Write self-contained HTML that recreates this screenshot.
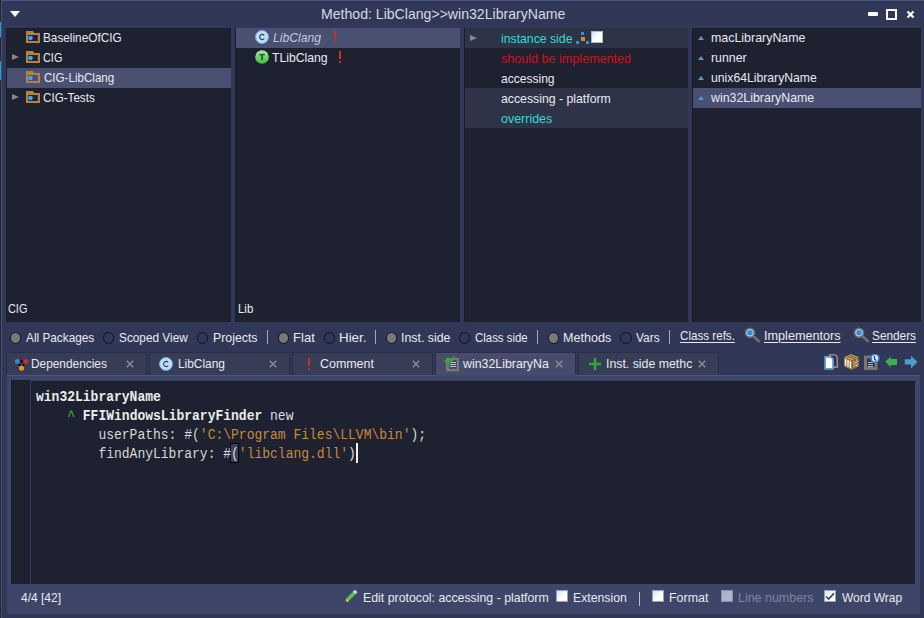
<!DOCTYPE html>
<html><head><meta charset="utf-8">
<style>
*{margin:0;padding:0;box-sizing:border-box}
html,body{width:924px;height:618px;overflow:hidden;background:#313757}
body{position:relative;font-family:"Liberation Sans",sans-serif;font-size:13px;color:#e8eaf0}
.a{position:absolute}
.t{position:absolute;white-space:nowrap;line-height:14px;height:14px;transform-origin:0 0}
.panel{position:absolute;top:28px;height:294px;background:#1e2230;border-left:1px solid #1a1d29;border-top:1px solid #1a1d29}
.sel{position:absolute;background:#4a5072}
.hl{position:absolute;background:#2f3348}
.fold{position:absolute;width:14px;height:13px}
.exp{position:absolute;width:0;height:0;border-top:3.8px solid transparent;border-bottom:3.8px solid transparent;border-left:7.6px solid #888888}
.up{position:absolute;width:0;height:0;border-left:3.7px solid transparent;border-right:3.7px solid transparent;border-bottom:4.4px solid #4b9dcc}
.radio{position:absolute;width:11.4px;height:11.4px;border-radius:50%;border:1.5px solid #101218;background:transparent}
.radio.on{background:#787878}
.sep{position:absolute;width:1px;height:14px;background:#98b0bc}
.tab{position:absolute;top:352px;height:23px;width:141px;background:#383d57;border:1px solid #2b2f45;border-bottom:none}
.tab.on{background:#474c6d;border-color:#2b2f45}
.x{position:absolute;color:#8d91a3;font-size:15px;line-height:14px}
.code{position:absolute;font-family:"Liberation Mono",monospace;font-size:14px;white-space:pre;line-height:19px;transform:scaleX(0.92857);transform-origin:0 0}
.cb{position:absolute;width:12px;height:12px;background:linear-gradient(135deg,#cfe6f5,#ffffff 60%);border:1px solid #9aa0b0}
</style></head><body>
<!-- desktop strip -->
<div class="a" style="left:0;top:0;width:1px;height:618px;background:#222a2b"></div>
<div class="a" style="left:0;top:22px;width:1px;height:15px;background:#2a9ad8"></div>
<div class="a" style="left:0;top:61px;width:1px;height:19px;background:#2a9ad8"></div>
<div class="a" style="left:1px;top:0;width:923px;height:1px;background:#4a5482"></div>
<div class="a" style="left:1px;top:0;width:1px;height:618px;background:#454f78"></div>

<!-- title bar -->
<svg class="a" style="left:9px;top:10px" width="12" height="8"><path d="M1 1 L11 1 L6 7 Z" fill="#fff"/></svg>
<div class="t" style="left:321.45px;top:6px;font-size:15px;line-height:16px;height:16px;color:#d6d9e4;transform:scaleX(0.9391)">Method: LibClang&gt;&gt;win32LibraryName</div>
<div class="a" style="left:868px;top:12px;width:10px;height:4px;background:#fff;border-radius:1px"></div>
<div class="a" style="left:886px;top:9px;width:11px;height:11px;border:2px solid #fff"></div>
<svg class="a" style="left:906px;top:10px" width="9" height="9"><path d="M1.5 1.5 L7.5 7.5 M7.5 1.5 L1.5 7.5" stroke="#fff" stroke-width="2.2"/></svg>

<!-- panel 1 -->
<div class="panel" style="left:6px;width:225px"></div>
<div class="sel" style="left:7px;top:68px;width:224px;height:20px"></div>
<div id="p1"></div>
<!-- panel 2 -->
<div class="panel" style="left:235px;width:225px"></div>
<div class="sel" style="left:236px;top:28px;width:224px;height:20px"></div>
<!-- panel 3 -->
<div class="panel" style="left:464px;width:224px"></div>
<div class="hl" style="left:465px;top:28px;width:223px;height:20px"></div>
<div class="hl" style="left:465px;top:88px;width:223px;height:40px"></div>
<!-- panel 4 -->
<div class="panel" style="left:692px;width:229px"></div>
<div class="sel" style="left:693px;top:88px;width:228px;height:20px"></div>

<!-- panel 1 content -->
<svg class="a" style="left:26px;top:31px" width="14" height="13"><path d="M0 0 H7 L8.2 2 H14 V12 H0 Z" fill="#b5823e"/><rect x="2" y="4" width="9.8" height="6" fill="#1e2230"/><circle cx="4.5" cy="7" r="2.3" fill="#3fa8f4"/></svg>
<svg class="a" style="left:26px;top:51px" width="14" height="13"><path d="M0 0 H7 L8.2 2 H14 V12 H0 Z" fill="#b5823e"/><rect x="2" y="4" width="9.8" height="6" fill="#1e2230"/><circle cx="4.5" cy="7" r="2.3" fill="#3fa8f4"/></svg>
<svg class="a" style="left:26px;top:71px" width="14" height="13"><path d="M0 0 H7 L8.2 2 H14 V12 H0 Z" fill="#b5823e"/><rect x="2" y="4" width="9.8" height="6" fill="#4a5072"/><circle cx="4.5" cy="7" r="2.3" fill="#3fa8f4"/></svg>
<svg class="a" style="left:26px;top:91px" width="14" height="13"><path d="M0 0 H7 L8.2 2 H14 V12 H0 Z" fill="#b5823e"/><rect x="2" y="4" width="9.8" height="6" fill="#1e2230"/><circle cx="4.5" cy="7" r="2.3" fill="#3fa8f4"/></svg>
<div class="exp" style="left:11.8px;top:53.8px"></div>
<div class="exp" style="left:11.8px;top:93.8px"></div>
<div class="t" style="left:42.77px;top:31px;transform:scaleX(0.9069)">BaselineOfCIG</div>
<div class="t" style="left:42.63px;top:51px;transform:scaleX(0.8379)">CIG</div>
<div class="t" style="left:43.52px;top:71px;transform:scaleX(0.8917)">CIG-LibClang</div>
<div class="t" style="left:42.50px;top:91px;transform:scaleX(0.8955)">CIG-Tests</div>
<div class="t" style="left:7.63px;top:302px;transform:scaleX(0.8379)">CIG</div>

<!-- panel 2 content -->
<svg class="a" style="left:255px;top:30px" width="14" height="14"><circle cx="7" cy="7" r="6.5" fill="#bde0f8" stroke="#62aee6" stroke-width="1"/><path d="M9.2 5.3 A2.6 2.6 0 1 0 9.2 8.7" fill="none" stroke="#3c3c3c" stroke-width="1.15"/></svg>
<svg class="a" style="left:255px;top:50px" width="14" height="14"><defs><linearGradient id="gT" x1="0" y1="0" x2="0" y2="1"><stop offset="0" stop-color="#aaeaa6"/><stop offset="1" stop-color="#3cc038"/></linearGradient></defs><circle cx="7" cy="7" r="6.8" fill="url(#gT)"/><path d="M4.2 4.6 H9.8" stroke="#3a583a" stroke-width="1.5"/><path d="M7 4.6 V9.9" stroke="#3a583a" stroke-width="1.9"/></svg>
<div class="t" style="left:273.17px;top:31px;font-style:italic;color:#c3c8dc;transform:scaleX(0.9371)">LibClang</div>
<div class="t" style="left:272.19px;top:51px;transform:scaleX(0.9389)">TLibClang</div>
<div class="t" style="left:238.00px;top:302px;transform:scaleX(0.8775)">Lib</div>

<!-- panel 3 content -->
<div class="exp" style="left:469.8px;top:34.6px"></div>
<div class="t" style="left:501.28px;top:32px;color:#36dad2;transform:scaleX(0.9416)">instance side</div>
<div class="a" style="left:581px;top:32px;width:3px;height:3px;background:#3a8fd0"></div>
<div class="a" style="left:581px;top:37px;width:4px;height:4px;background:#d08f3a"></div>
<div class="a" style="left:576px;top:41px;width:3px;height:3px;background:#3a8fd0"></div>
<div class="a" style="left:586px;top:41px;width:3px;height:3px;background:#3a8fd0"></div>
<div class="a" style="left:591px;top:31px;width:12px;height:12px;background:linear-gradient(135deg,#cde8f8,#fff 55%);border:1px solid #b0b8c8"></div>
<div class="t" style="left:500.79px;top:52px;color:#d0101e;transform:scaleX(0.9680)">should be implemented</div>
<div class="t" style="left:500.63px;top:72px;transform:scaleX(0.9264)">accessing</div>
<div class="t" style="left:500.9px;top:92px;transform:scaleX(0.9441)">accessing - platform</div>
<div class="t" style="left:500.97px;top:112px;color:#36dad2;transform:scaleX(0.9584)">overrides</div>

<!-- panel 4 content -->
<div class="up" style="left:697.8px;top:35.5px"></div>
<div class="up" style="left:697.8px;top:55.5px"></div>
<div class="up" style="left:697.8px;top:75.5px"></div>
<div class="up" style="left:697.8px;top:95.5px"></div>
<div class="t" style="left:711.48px;top:31px;transform:scaleX(0.9547)">macLibraryName</div>
<div class="t" style="left:711.39px;top:51px;transform:scaleX(0.9480)">runner</div>
<div class="t" style="left:710.96px;top:71px;transform:scaleX(0.9383)">unix64LibraryName</div>
<div class="t" style="left:710.77px;top:91px;transform:scaleX(0.9524)">win32LibraryName</div>

<!-- toolbar -->
<div class="radio on" style="left:10.1px;top:332.2px"></div>
<div class="t" style="left:25.75px;top:331px;transform:scaleX(0.9083)">All Packages</div>
<div class="radio" style="left:102.8px;top:332.2px"></div>
<div class="t" style="left:118.69px;top:331px;transform:scaleX(0.9089)">Scoped View</div>
<div class="radio" style="left:196.7px;top:332.2px"></div>
<div class="t" style="left:213.27px;top:331px;transform:scaleX(0.9467)">Projects</div>
<div class="sep" style="left:267px;top:330px"></div>
<div class="radio on" style="left:277.7px;top:332.2px"></div>
<div class="t" style="left:292.61px;top:331px;transform:scaleX(1.0043)">Flat</div>
<div class="radio" style="left:324.1px;top:332.2px"></div>
<div class="t" style="left:339.04px;top:331px;transform:scaleX(1.0279)">Hier.</div>
<div class="sep" style="left:375px;top:330px"></div>
<div class="radio on" style="left:385.8px;top:332.2px"></div>
<div class="t" style="left:401.33px;top:331px;transform:scaleX(0.9503)">Inst. side</div>
<div class="radio" style="left:458.8px;top:332.2px"></div>
<div class="t" style="left:475.20px;top:331px;transform:scaleX(0.8790)">Class side</div>
<div class="sep" style="left:537px;top:330px"></div>
<div class="radio on" style="left:548.1px;top:332.2px"></div>
<div class="t" style="left:563.18px;top:331px;transform:scaleX(0.9674)">Methods</div>
<div class="radio" style="left:620.3px;top:332.2px"></div>
<div class="t" style="left:636.09px;top:331px;transform:scaleX(0.9171)">Vars</div>
<div class="sep" style="left:669px;top:330px"></div>
<div class="t" style="left:680.00px;top:329px;text-decoration:underline;text-underline-offset:2px;transform:scaleX(0.8941)">Class refs.</div>
<div class="t" style="left:764.49px;top:329px;text-decoration:underline;text-underline-offset:2px;transform:scaleX(0.9727)">Implementors</div>
<div class="t" style="left:872.46px;top:329px;text-decoration:underline;text-underline-offset:2px;transform:scaleX(0.9087)">Senders</div>

<!-- tabs -->
<div class="tab" style="left:6px"></div>
<div class="tab" style="left:149px"></div>
<div class="tab" style="left:292px"></div>
<div class="tab on" style="left:435px"></div>
<div class="tab" style="left:578px"></div>
<div class="t" style="left:31.43px;top:357px;transform:scaleX(0.9123)">Dependencies</div>
<div class="t" style="left:177.55px;top:357px;transform:scaleX(0.9147)">LibClang</div>
<div class="t" style="left:319.84px;top:357px;transform:scaleX(0.9567)">Comment</div>
<div class="t" style="left:463.27px;top:357px;transform:scaleX(0.9503)">win32LibraryNa</div>
<div class="t" style="left:606.14px;top:357px;transform:scaleX(0.9478)">Inst. side methc</div>

<!-- editor -->
<div class="a" style="left:7px;top:375px;width:913px;height:239px;background:#3d4569;border-top:1px solid #4a5488"></div>
<div class="a" style="left:436px;top:375px;width:139px;height:1px;background:#424a6c"></div>
<div class="a" style="left:11px;top:380px;width:19px;height:204px;background:#1e2230;border-left:1px solid #1a1d28;border-top:1px solid #1a1d28;border-right:1px solid #1a1d28"></div>
<div class="a" style="left:31px;top:381px;width:884px;height:203px;background:#1e2230;border-left:1px solid #1a1d28;border-top:1px solid #1a1d28"></div>
<div class="a" style="left:230px;top:443px;width:9px;height:20px;border:1px solid #000;background:#3c4262"></div>
<div class="code" style="left:36px;top:388px"><b style="color:#ececec">win32LibraryName</b>
    <span style="color:#34c44a">^</span> <b style="color:#ececec">FFIWindowsLibraryFinder</b> <span style="color:#dcdee8">new</span>
<span style="color:#d8d8d8">        userPaths: #(<span style="color:#c8893a">'C:\Program Files\LLVM\bin'</span>);
        findAnyLibrary: #(<span style="color:#c8893a">'libclang.dll'</span>)</span></div>

<!-- status bar -->
<div class="t" style="left:21.14px;top:591px;transform:scaleX(0.9235)">4/4 [42]</div>
<div class="t" style="left:363.02px;top:591px;transform:scaleX(0.9485)">Edit protocol: accessing - platform</div>
<div class="t" style="left:573.14px;top:591px;transform:scaleX(0.9417)">Extension</div>
<div class="t" style="left:669.10px;top:591px;transform:scaleX(0.9571)">Format</div>
<div class="t" style="left:738.12px;top:591px;color:#7d84a0;transform:scaleX(0.9581)">Line numbers</div>
<div class="t" style="left:842.22px;top:591px;transform:scaleX(0.9217)">Word Wrap</div>

<!-- tab icons -->
<svg class="a" style="left:13px;top:357px" width="16" height="15"><path d="M4.4 4.4 L12.5 4.4 L8.5 11.1 Z" fill="none" stroke="#000" stroke-width="1.6"/><circle cx="4.4" cy="4.4" r="2.5" fill="#3b87c8"/><circle cx="12.5" cy="4.4" r="2.5" fill="#c8302a"/><circle cx="8.5" cy="11.1" r="2.6" fill="#e8961e"/></svg>
<svg class="a" style="left:159px;top:357px" width="14" height="14"><circle cx="7" cy="7" r="6.5" fill="#bde0f8" stroke="#62aee6" stroke-width="1"/><path d="M9.2 5.3 A2.6 2.6 0 1 0 9.2 8.7" fill="none" stroke="#3c3c3c" stroke-width="1.15"/></svg>
<div class="a" style="left:308px;top:358px;width:2px;height:8px;background:#c83020"></div>
<div class="a" style="left:308px;top:368px;width:2px;height:2px;background:#c83020"></div>
<div class="a" style="left:334px;top:31px;width:2px;height:8px;background:#c83020"></div>
<div class="a" style="left:334px;top:41px;width:2px;height:2px;background:#c83020"></div>
<div class="a" style="left:339px;top:51px;width:2px;height:8px;background:#c83020"></div>
<div class="a" style="left:339px;top:61px;width:2px;height:2px;background:#c83020"></div>
<svg class="a" style="left:444px;top:356px" width="16" height="16"><rect x="2" y="2" width="13" height="13.3" fill="#7c7a6e"/><rect x="5" y="4" width="7.7" height="8.8" fill="#40466a"/><path d="M6 6.5 H12 M6 8.5 H12 M6 10.5 H12" stroke="#c0c2d0" stroke-width="1"/><path d="M1 4.2 L4.4 7.2 L10.5 1.3" fill="none" stroke="#2ea836" stroke-width="2.8"/></svg>
<svg class="a" style="left:588px;top:357px" width="14" height="14"><path d="M7 1 V13 M1 7 H13" stroke="#30a636" stroke-width="2.4"/></svg>
<svg class="a" style="left:126px;top:360px" width="8" height="8"><path d="M0.8 0.8 L7.2 7.2 M7.2 0.8 L0.8 7.2" stroke="#8a8b8c" stroke-width="1.5"/></svg>
<svg class="a" style="left:269px;top:360px" width="8" height="8"><path d="M0.8 0.8 L7.2 7.2 M7.2 0.8 L0.8 7.2" stroke="#8a8b8c" stroke-width="1.5"/></svg>
<svg class="a" style="left:412px;top:360px" width="8" height="8"><path d="M0.8 0.8 L7.2 7.2 M7.2 0.8 L0.8 7.2" stroke="#8a8b8c" stroke-width="1.5"/></svg>
<svg class="a" style="left:555px;top:360px" width="8" height="8"><path d="M0.8 0.8 L7.2 7.2 M7.2 0.8 L0.8 7.2" stroke="#8a8b8c" stroke-width="1.5"/></svg>
<svg class="a" style="left:698px;top:360px" width="8" height="8"><path d="M0.8 0.8 L7.2 7.2 M7.2 0.8 L0.8 7.2" stroke="#8a8b8c" stroke-width="1.5"/></svg>
<!-- toolbar right icons -->
<svg class="a" style="left:824px;top:353px" width="16" height="18"><path d="M5.6 1.7 H11 L13.3 4 V14.1 H5.6 Z" fill="#2e3352" stroke="#8c8a86" stroke-width="1.6"/><path d="M1.1 3.8 H6.6 L9 6.2 V15.8 H1.1 Z" fill="#fff" stroke="#6a9ec0" stroke-width="1.7"/></svg>
<svg class="a" style="left:843px;top:353px" width="17" height="18"><path d="M1 4.2 L8 1 L16 4.2 L9 7.5 Z" fill="#c49a62"/><path d="M1 4.2 L9 7.5 V17 L1 13.5 Z" fill="#a87c44"/><path d="M9 7.5 L16 4.2 V13.6 L9 17 Z" fill="#8a6434"/><path d="M4 2.8 L11.5 6 M6.5 1.9 L13.5 5.2" stroke="#7a5a30" stroke-width="0.9"/><path d="M2.6 6 V12.6 M5 7 V13.8 M7.4 8 V14.9" stroke="#fff" stroke-width="1.3"/><path d="M10.5 8.2 h1 M13 7 h1 M11.7 9.6 h1 M14.2 8.4 h1 M10.5 11 h1 M13 9.8 h1 M11.7 12.4 h1 M14.2 11.2 h1 M10.5 13.8 h1 M13 12.6 h1" stroke="#f4ecdc" stroke-width="1.1"/></svg>
<svg class="a" style="left:863px;top:354px" width="18" height="17"><rect x="2.5" y="3" width="10.5" height="11.5" fill="#2e3352" stroke="#7a7770" stroke-width="3"/><path d="M5 8.5 H10 M5 10.5 H10 M5 12.5 H10" stroke="#b8bac8" stroke-width="0.9"/><circle cx="12" cy="4.3" r="4" fill="#cfe8f8" stroke="#2f7fd0" stroke-width="1.6"/><path d="M11.5 2 V5 L13 6.5" stroke="#333" stroke-width="1.1" fill="none"/></svg>
<svg class="a" style="left:885px;top:356px" width="13" height="12"><path d="M0.3 5.5 L5.8 0.5 V3.1 H12 V9 H5.8 V11.5 Z" fill="#3cb050"/></svg>
<svg class="a" style="left:904px;top:355px" width="14" height="14"><path d="M13.5 7 L7 0.8 V4.2 H0.8 V9.6 H7 V13.2 Z" fill="#4aa0c8"/></svg>
<!-- magnifiers -->
<svg class="a" style="left:743px;top:326px" width="18" height="17"><path d="M10.5 10.2 L15.8 15.2" stroke="#707070" stroke-width="2.6" stroke-linecap="round"/><circle cx="7" cy="6.8" r="4.6" fill="#3a88d6" stroke="#6a6a6a" stroke-width="1.6"/><circle cx="7" cy="6.8" r="3.3" fill="none" stroke="#d8e8f8" stroke-width="0.8"/></svg>
<svg class="a" style="left:852px;top:326px" width="18" height="17"><path d="M10.5 10.2 L15.8 15.2" stroke="#707070" stroke-width="2.6" stroke-linecap="round"/><circle cx="7" cy="6.8" r="4.6" fill="#3a88d6" stroke="#6a6a6a" stroke-width="1.6"/><circle cx="7" cy="6.8" r="3.3" fill="none" stroke="#d8e8f8" stroke-width="0.8"/></svg>
<!-- status icons -->
<svg class="a" style="left:344px;top:590px" width="14" height="14"><path d="M3.2 10 L10.2 3" stroke="#52c852" stroke-width="3.6"/><path d="M10.1 3.1 L12.3 0.9" stroke="#d4d4d4" stroke-width="3.6"/><path d="M1.5 12.3 L2.1 8.6 L5 11.5 Z" fill="#f0c080"/><circle cx="2" cy="11.8" r="0.8" fill="#333"/></svg>
<div class="cb" style="left:556px;top:590px"></div>
<div class="cb" style="left:652px;top:590px"></div>
<div class="cb" style="left:721px;top:590px;background:linear-gradient(135deg,#a0b0d0,#b0b4c8 50%);border-color:#8a90a8"></div>
<div class="cb" style="left:824px;top:590px"></div>
<svg class="a" style="left:824px;top:590px" width="12" height="12"><path d="M2 6.5 L4.6 9 L10 3.4" fill="none" stroke="#3a3f58" stroke-width="1.6"/></svg>
<div class="a" style="left:639px;top:592px;width:1px;height:14px;background:#b0c4cc"></div>
<!-- cursor & bracket -->

<div class="a" style="left:356px;top:443px;width:1.5px;height:20px;background:#f0f0f0"></div>
</body></html>
